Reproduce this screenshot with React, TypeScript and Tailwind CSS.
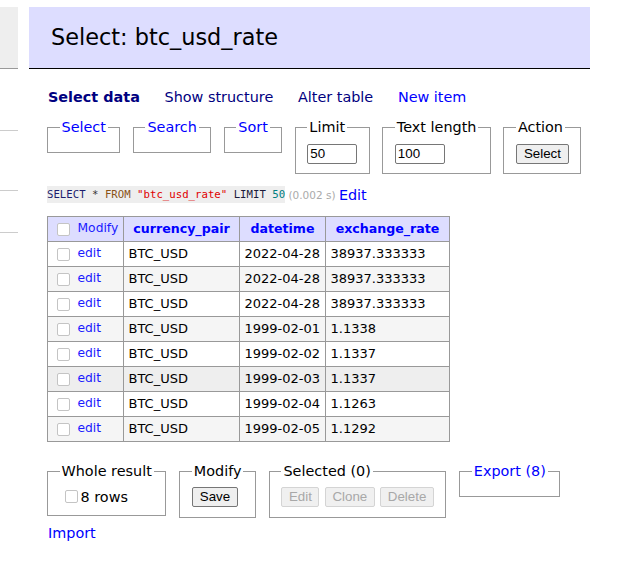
import React from "react";

function Cb({ className = "" }: { className?: string }) {
  return (
    <span
      className={
        "inline-block w-[13px] h-[13px] shrink-0 border border-[#c4c4c4] rounded-[2px] bg-white " +
        className
      }
    />
  );
}

function Fs({
  legend,
  link = false,
  children,
}: {
  legend: string;
  link?: boolean;
  children?: React.ReactNode;
}) {
  return (
    <fieldset className="border border-[#999] px-[11.5px] pt-[7.2px] pb-[8.5px] m-0 min-w-0">
      <legend
        className={
          "px-[2px] text-[14.4px] leading-[18px] " +
          (link ? "text-[#0000ff]" : "text-black")
        }
      >
        {legend}
      </legend>
      {children}
    </fieldset>
  );
}

const rows: [string, string, string][] = [
  ["2022-04-28", "38937.333333", "bg-white"],
  ["2022-04-28", "38937.333333", "bg-[#f5f5f5]"],
  ["2022-04-28", "38937.333333", "bg-white"],
  ["1999-02-01", "1.1338", "bg-[#f5f5f5]"],
  ["1999-02-02", "1.1337", "bg-white"],
  ["1999-02-03", "1.1337", "bg-[#eeeeee]"],
  ["1999-02-04", "1.1263", "bg-white"],
  ["1999-02-05", "1.1292", "bg-[#f5f5f5]"],
];

const btn =
  "h-[20px] px-[7px] border border-[#767676] rounded-[2px] bg-[#efefef] text-black text-[13.33px] leading-[16px] font-['Liberation_Sans',Arial,sans-serif]";
const btnDis =
  "h-[20px] px-[6.5px] border border-[#d4d4d4] rounded-[2px] bg-[#f0f0f0] text-[#a8a8a8] text-[13.33px] leading-[16px] font-['Liberation_Sans',Arial,sans-serif]";
const inp =
  "w-[50px] h-[20px] px-[2px] border border-[#767676] rounded-[2px] bg-white text-black text-[13.33px] leading-[16px] font-['Liberation_Sans',Arial,sans-serif] flex items-center";

export default function App() {
  return (
    <div className="w-[643px] h-[588px] bg-white overflow-hidden font-['DejaVu_Sans',Verdana,sans-serif] text-[14.4px] leading-[18px] text-black">
      <div className="flex items-start">
        {/* left menu remnants */}
        <div className="w-[18px] shrink-0 mt-[7px]">
          <div className="h-[62px] bg-[#eee] border-b border-[#999]" />
          <div className="mt-[61px] h-px bg-[#ccc]" />
          <div className="mt-[59px] h-px bg-[#ccc]" />
          <div className="mt-[41px] h-px bg-[#ccc]" />
        </div>

        {/* main content */}
        <div className="ml-[11px] w-[561px] mt-[7px]">
          <h2 className="h-[62px] bg-[#ddf] border-b border-black pl-[22px] flex items-center text-[22.4px] font-normal pb-[1px]">
            Select: btc_usd_rate
          </h2>

          <div className="pl-[19px] mt-[19px] flex gap-[24.7px]">
            <span className="font-bold text-[#000080]">Select data</span>
            <span className="text-[#000080]">Show structure</span>
            <span className="text-[#000080]">Alter table</span>
            <span className="text-[#0000ff]">New item</span>
          </div>

          <div className="pl-[18px]">
            <div className="mt-[12px] flex items-start gap-[12.5px]">
              <Fs legend="Select" link />
              <Fs legend="Search" link />
              <Fs legend="Sort" link />
              <Fs legend="Limit">
                <div className="h-[21px] flex items-end">
                  <div className={inp}>50</div>
                </div>
              </Fs>
              <Fs legend="Text length">
                <div className="h-[21px] flex items-end">
                  <div className={inp}>100</div>
                </div>
              </Fs>
              <Fs legend="Action">
                <div className="h-[21px] flex items-end">
                  <button className={btn}>Select</button>
                </div>
              </Fs>
            </div>

            <div className="mt-[12px] flex items-center h-[18px] whitespace-pre">
              <code className="bg-[#eee] font-['DejaVu_Sans_Mono',monospace] text-[10.7px] leading-[17px]">
                <span className="text-[#1c1c6e]">SELECT</span>
                <span className="text-[#333]"> * </span>
                <span className="text-[#8a5418]">FROM</span>
                <span> </span>
                <span className="text-[#e00000]">"btc_usd_rate"</span>
                <span> </span>
                <span className="text-[#1a1a3a]">LIMIT</span>
                <span> </span>
                <span className="text-[#007f7f]">50</span>
              </code>
              <span className="text-[10.5px] text-[#aaa]"> (0.002 s) </span>
              <span className="text-[#0000ff]">Edit</span>
            </div>

            <table className="mt-[12.5px] border-collapse table-fixed w-[402px] border-t border-l border-[#999] text-[13px] leading-[24px]">
              <colgroup>
                <col className="w-[76px]" />
                <col className="w-[116px]" />
                <col className="w-[86px]" />
                <col className="w-[124px]" />
              </colgroup>
              <thead>
                <tr className="bg-[#ddf]">
                  <td className="border-r border-b border-[#999] p-0 pl-[8.5px]">
                    <div className="flex items-center h-[24px]">
                      <Cb />
                      <span className="ml-[8px] -mt-[3px] text-[12.3px] text-[#1a1aff]">Modify</span>
                    </div>
                  </td>
                  <th className="border-r border-b border-[#999] p-0 text-center font-bold text-[12.6px] text-[#0000ff]">
                    currency_pair
                  </th>
                  <th className="border-r border-b border-[#999] p-0 text-center font-bold text-[12.6px] text-[#0000ff]">
                    datetime
                  </th>
                  <th className="border-r border-b border-[#999] p-0 text-center font-bold text-[12.6px] text-[#0000ff]">
                    exchange_rate
                  </th>
                </tr>
              </thead>
              <tbody>
                {rows.map((r, i) => (
                  <tr key={i} className={r[2]}>
                    <td className="border-r border-b border-[#999] p-0 pl-[8.5px]">
                      <div className="flex items-center h-[24px]">
                        <Cb />
                        <span className="ml-[8px] -mt-[3px] text-[12.3px] text-[#1a1aff]">edit</span>
                      </div>
                    </td>
                    <td className="border-r border-b border-[#999] p-0 pl-[4.5px]">BTC_USD</td>
                    <td className="border-r border-b border-[#999] p-0 pl-[4.5px]">{r[0]}</td>
                    <td className="border-r border-b border-[#999] p-0 pl-[4.5px]">{r[1]}</td>
                  </tr>
                ))}
              </tbody>
            </table>

            <div className="mt-[20px] flex items-start gap-[13px]">
              <Fs legend="Whole result">
                <div className="flex items-center h-[19px]">
                  <Cb className="ml-[5px] mr-[3px]" />
                  <span>8 rows</span>
                </div>
              </Fs>
              <Fs legend="Modify">
                <div className="h-[21px] flex items-start">
                  <button className={btn}>Save</button>
                </div>
              </Fs>
              <Fs legend="Selected (0)">
                <div className="h-[21px] flex items-start gap-[5.5px]">
                  <button className={btnDis}>Edit</button>
                  <button className={btnDis}>Clone</button>
                  <button className={btnDis}>Delete</button>
                </div>
              </Fs>
              <Fs legend="Export (8)" link />
            </div>

            <div className="mt-[6px] text-[#0000ff] pl-[1px]">Import</div>
          </div>
        </div>
      </div>
    </div>
  );
}
